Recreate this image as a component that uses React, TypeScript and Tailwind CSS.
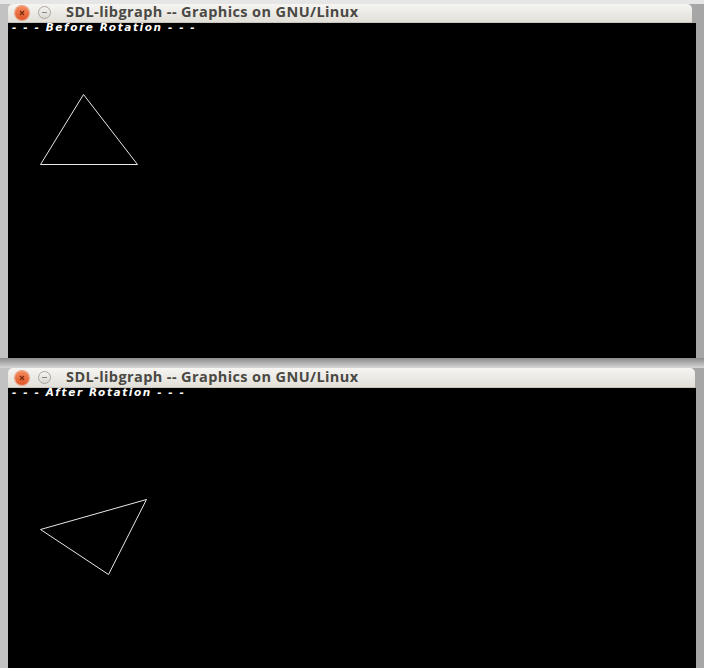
import React from "react";

type Pt = [number, number];

function TitleBar({ cls }: { cls: string }) {
  return (
    <div
      className={`${cls} flex items-center rounded-t-[5px] bg-gradient-to-b from-[#f6f5f2] to-[#e2dfd8] border-b border-[#c8c5be]`}
    >
      <div className="ml-[7px] w-[14px] h-[14px] rounded-full bg-gradient-to-b from-[#f58a5c] to-[#df5424] flex items-center justify-center shadow-[0_0_0_1px_#e9a184]">
        <svg width="6" height="6" viewBox="0 0 6 6">
          <path d="M1 1L5 5M5 1L1 5" stroke="#7a2a10" strokeWidth="1.2" />
        </svg>
      </div>
      <div className="ml-[9px] w-[13px] h-[13px] rounded-full border border-[#aaa7a0] bg-gradient-to-b from-[#f4f3f0] to-[#dcd9d2] flex items-center justify-center">
        <div className="w-[5px] h-[1px] bg-[#8a8780]" />
      </div>
      <span
        className="ml-[15px] text-[14.5px] font-bold text-[#4a4944] leading-none tracking-[0.4px]"
        style={{ fontFamily: '"Open Sans", "DejaVu Sans", sans-serif' }}
      >
        SDL-libgraph -- Graphics on GNU/Linux
      </span>
    </div>
  );
}

function Screen({ label, pts, h }: { label: string; pts: Pt[]; h: string }) {
  return (
    <div className={`relative ${h} bg-black`}>
      <div
        className="pl-[4px] text-white text-[10.5px] leading-[9px] font-bold italic whitespace-pre tracking-[1.6px]"
        style={{ fontFamily: '"DejaVu Sans", "Liberation Sans", sans-serif' }}
      >
        {label}
      </div>
      <svg className="absolute left-0 top-0" width="688" height="340">
        <polygon
          points={pts.map((p) => p.join(",")).join(" ")}
          fill="none"
          stroke="#e8e8e8"
          strokeWidth="1"
        />
      </svg>
    </div>
  );
}

export default function App() {
  return (
    <div className="w-[704px] h-[668px] overflow-hidden bg-gradient-to-r from-[#c2c2c2] via-[#b4b4b4] to-[#a6a6a6] flex flex-col">
      <div className="h-[4px] bg-[#e6e6e6]" />
      <div className="ml-[8px] w-[688px]">
        <TitleBar cls="h-[19px] mr-[4px]" />
        <Screen
          label="- - - Before Rotation - - -"
          pts={[
            [75.5, 71.5],
            [32.5, 141.5],
            [129.5, 141.5],
          ]}
          h="h-[335px]"
        />
      </div>
      <div className="h-[12px] bg-gradient-to-b from-[#8c8c8c] to-[#d6d6d6]" />
      <div className="ml-[8px] w-[688px]">
        <TitleBar cls="h-[20px] mr-[1px]" />
        <Screen
          label="- - - After Rotation - - -"
          pts={[
            [32.5, 141.5],
            [138.5, 111.5],
            [100.5, 186.5],
          ]}
          h="h-[280px]"
        />
      </div>
    </div>
  );
}
